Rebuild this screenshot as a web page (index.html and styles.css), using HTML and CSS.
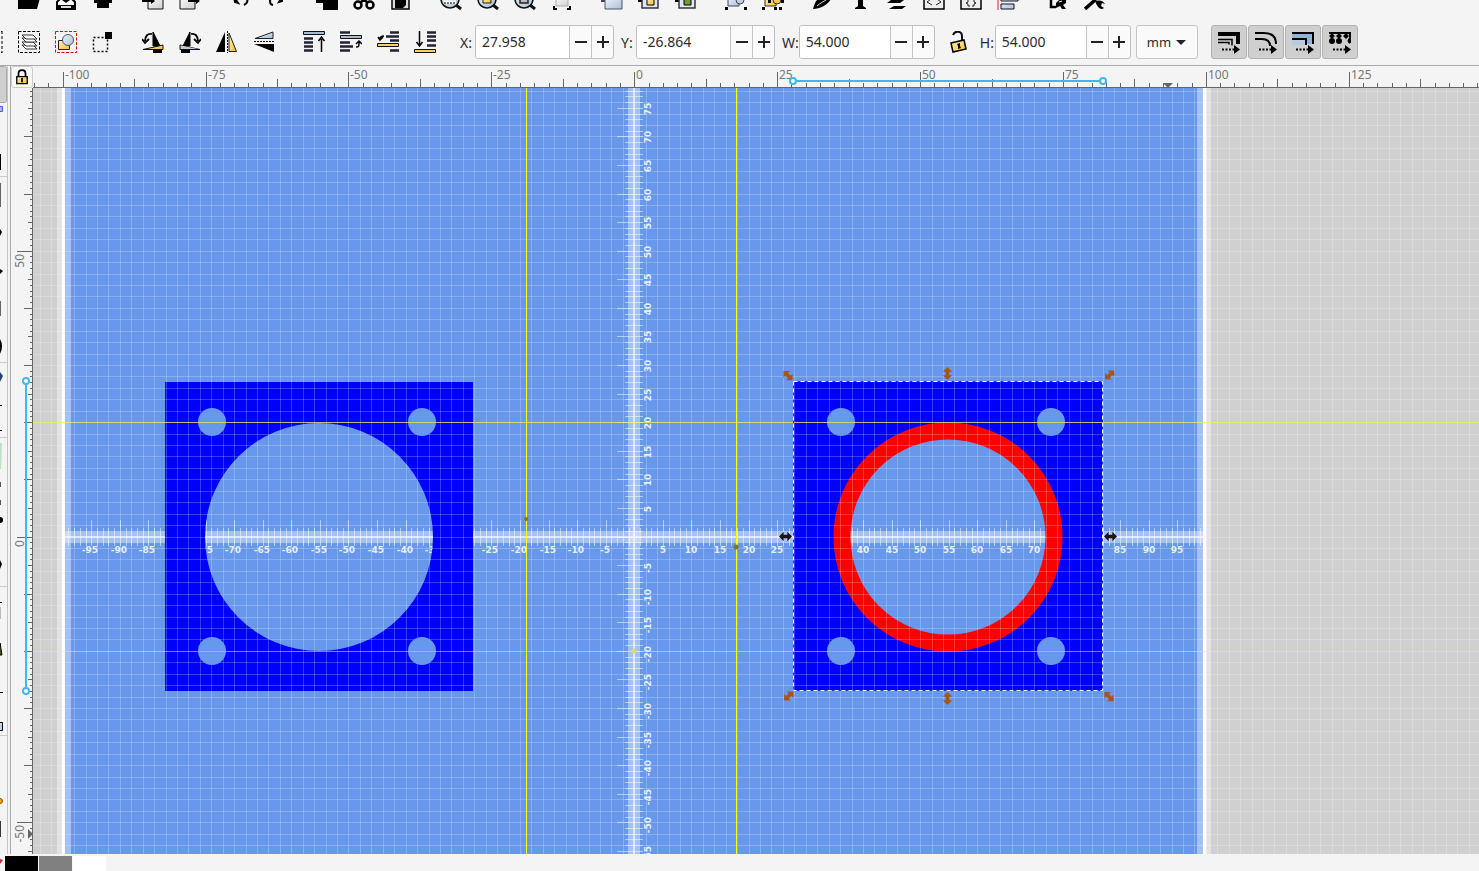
FILE: index.html
```
<!DOCTYPE html>
<html lang="en">
<head>
<meta charset="utf-8">
<title>Drawing editor</title>
<link rel="stylesheet" href="styles.css">
</head>
<body>
<svg class="defs" width="0" height="0" aria-hidden="true">
  <defs>
    <linearGradient id="gold" x1="0" x2="1" y1="0" y2="1"><stop offset="0" stop-color="#fff3b8"/><stop offset="1" stop-color="#f2bd2c"/></linearGradient>
    <linearGradient id="steel" x1="0" x2="1" y1="0" y2="1"><stop offset="0" stop-color="#eef4fb"/><stop offset="1" stop-color="#a9c0d8"/></linearGradient>
    <linearGradient id="paper" x1="0" x2="1" y1="0" y2="1"><stop offset="0" stop-color="#fff"/><stop offset="1" stop-color="#cfcfca"/></linearGradient>
    <symbol id="lens" viewBox="0 0 22 10"><circle cx="10" cy="-1" r="9" fill="url(#steel)" stroke="#111" stroke-width="1.6"/><path d="M16 5l5 4" stroke="#111" stroke-width="3"/></symbol>
    <symbol id="arrow" viewBox="0 0 14 14"><path d="M0 7l5-5v3h4V2l5 5-5 5V9H5v3z"/></symbol>
    <symbol id="turn" viewBox="0 0 22 22"><path d="M11 1v14h7z" fill="#000" stroke="#000"/><path d="M1 18.500L21 14v4.500z" fill="url(#gold)" stroke="#111"/><path d="M11 19h9v3h-9z"/><path d="M10 3C6 2 3 5 3 10M0 8l3 4 4-4" fill="none" stroke="#000" stroke-width="1.800"/></symbol>
    <symbol id="move" viewBox="0 0 24 24"><path d="M5 19.500h12" stroke="#000" stroke-width="2" stroke-dasharray="2 1.500"/><path d="M17 15l6 4.500-6 4.500z"/></symbol>
  </defs>
</svg>

<header class="toolbars">
  <div class="commands">
    <div class="group">
      <button class="cmd" aria-label="Open"><svg viewBox="0 0 22 10"><path d="M0 0h14l8-2-3 11H0z"/></svg></button>
      <button class="cmd" aria-label="Save"><svg viewBox="0 0 22 10"><path d="M2 2l4-4h10l4 4v7H2z" fill="#fff" stroke="#000" stroke-width="2"/><path d="M2 5h18v4H2z"/><path d="M6 6h10v2H6z" fill="#ddd"/><path d="M7 0h8l-4 3z"/></svg></button>
      <button class="cmd" aria-label="Print"><svg viewBox="0 0 22 10"><path d="M2 0h18v3H2zM5 2h12v6H5z"/></svg></button>
    </div>
    <div class="group">
      <button class="cmd" aria-label="Import"><svg viewBox="0 0 22 10"><path d="M6-4h15V9H6z" fill="url(#paper)" stroke="#111"/><path d="M0 0h10v2H0z"/><path d="M9-2l4 3-4 3z"/></svg></button>
      <button class="cmd" aria-label="Export"><svg viewBox="0 0 22 10"><path d="M1-4h15V9H1z" fill="url(#paper)" stroke="#111"/><path d="M9 0h9v2H9zM17-2l4 3-4 3z"/></svg></button>
    </div>
    <div class="group">
      <button class="cmd" aria-label="Undo"><svg viewBox="0 0 22 10"><path d="M5-3l4 6-3-1zM15-3c5 2 4 6 0 8" stroke="#000" stroke-width="2" fill="none"/></svg></button>
      <button class="cmd" aria-label="Redo"><svg viewBox="0 0 22 10"><path d="M16-3l-3 5 3-1zM7-3C3-1 3 4 7 5" stroke="#000" stroke-width="2" fill="none"/></svg></button>
    </div>
    <div class="group">
      <button class="cmd" aria-label="Copy"><svg viewBox="0 0 22 10"><path d="M0-5h13v8H0zM7-1h15v11H7z"/></svg></button>
      <button class="cmd" aria-label="Cut"><svg viewBox="0 0 22 10"><g fill="none" stroke="#000" stroke-width="2.500"><circle cx="5" cy="5" r="3.500"/><circle cx="17" cy="5" r="3.500"/><path d="M7 3l7-6M15 3L8-3"/></g></svg></button>
      <button class="cmd" aria-label="Paste"><svg viewBox="0 0 22 10"><path d="M2-4h17V9H2z" fill="#ddd" stroke="#000" stroke-width="1.500"/><path d="M5-2h11v7l-3 3H5z"/></svg></button>
    </div>
    <div class="group">
      <button class="cmd" aria-label="Zoom to selection"><svg viewBox="0 0 22 10"><use href="#lens"/><path d="M4 2h12" stroke="#fff" stroke-width="3"/><path d="M4 3h12" stroke="#000" stroke-dasharray="2 1"/></svg></button>
      <button class="cmd" aria-label="Zoom to drawing"><svg viewBox="0 0 22 10"><use href="#lens"/><path d="M6-2h8v5H6z" fill="url(#gold)" stroke="#222"/></svg></button>
      <button class="cmd" aria-label="Zoom to page"><svg viewBox="0 0 22 10"><use href="#lens"/><path d="M6-2h8v5H6z" fill="#bbb" stroke="#222" stroke-width="1.500"/></svg></button>
      <button class="cmd" aria-label="Zoom to width"><svg viewBox="0 0 22 10"><path d="M5-3h12v9H5z" fill="url(#paper)" stroke="#aaa"/><path d="M3 6v3h3M19 6v3h-3" stroke="#000" stroke-width="2" fill="none"/></svg></button>
    </div>
    <div class="group">
      <button class="cmd" aria-label="Duplicate"><svg viewBox="0 0 22 10"><path d="M0-3h6v5H0z" fill="#445"/><path d="M4-3h17V9H4z" fill="url(#steel)" stroke="#445566"/></svg></button>
      <button class="cmd" aria-label="Clone"><svg viewBox="0 0 22 10"><path d="M0-3h6v5H0z"/><path d="M4-3h16V8H4z" fill="#dde7f2" stroke="#334" stroke-width="1.500"/><path d="M9-3h7v8H9z" fill="url(#gold)" stroke="#000"/></svg></button>
      <button class="cmd" aria-label="Unlink clone"><svg viewBox="0 0 22 10"><path d="M0-3h6v5H0z"/><path d="M4-3h16V8H4z" fill="#dde7f2" stroke="#334" stroke-width="1.500"/><path d="M9-3h7v8H9z" fill="#6c9c3a" stroke="#000"/></svg></button>
    </div>
    <div class="group">
      <button class="cmd" aria-label="Group"><svg viewBox="0 0 22 10"><path d="M3-3h11v9H3z" fill="url(#steel)" stroke="#445"/><circle cx="15" cy="0" r="4" fill="#bdd0e4" stroke="#445"/><path d="M0 7h3v3H0zM19 7h3v3h-3z"/></svg></button>
      <button class="cmd" aria-label="Ungroup"><svg viewBox="0 0 22 10"><path d="M3-3h11v9H3z" fill="url(#gold)" stroke="#332"/><circle cx="15" cy="0" r="4" fill="#f2c54c" stroke="#332"/><path d="M0 7h3v3H0zM12 7h3v3h-3zM19 0h3v3h-3zM6 0h3v3H6zM17 7h3v3h-3z"/></svg></button>
    </div>
    <div class="group">
      <button class="cmd" aria-label="Fill and stroke"><svg viewBox="0 0 22 10"><path d="M1 9C3 2 5-3 12-3h8C17 4 9 9 1 9z"/><path d="M5 6C8 3 13 1 17-2" stroke="#ddd" fill="none"/></svg></button>
      <button class="cmd" aria-label="Text and font"><svg viewBox="0 0 22 10"><path d="M9-3h5v9l3 2v1H6V8l3-2z"/></svg></button>
      <button class="cmd" aria-label="Layers"><svg viewBox="0 0 22 10"><path d="M5 0h13l-4 3H1zM8 6h12l-4 3H3z"/></svg></button>
      <button class="cmd" aria-label="XML editor"><svg viewBox="0 0 22 10"><path d="M1-3h20V9H1z" fill="#eee" stroke="#000" stroke-width="1.500"/><path d="M8-1L4 2l5 3M14-1l4 3-5 3" fill="none" stroke="#222"/></svg></button>
      <button class="cmd" aria-label="CSS editor"><svg viewBox="0 0 22 10"><path d="M1-3h20V9H1z" fill="#eee" stroke="#000" stroke-width="1.500"/><path d="M8-2v4l-2 1 2 1v2h2M14-2v4l2 1-2 1v2h-2" fill="none" stroke="#222"/></svg></button>
      <button class="cmd" aria-label="Align"><svg viewBox="0 0 22 10"><path d="M1-3v13" stroke="#d22"/><path d="M4-3h17v4H4zM4 4h13v5H4z" fill="url(#steel)" stroke="#112"/></svg></button>
    </div>
    <div class="group">
      <button class="cmd" aria-label="Document properties"><svg viewBox="0 0 22 10"><path d="M4-3v10h5" stroke="#000" stroke-width="2.500" fill="none"/><path d="M9 8V3l4-4h6v4l-3 2 3 4h-4l-2-3z"/><path d="M12 2l3-1" stroke="#fff"/></svg></button>
      <button class="cmd" aria-label="Preferences"><svg viewBox="0 0 22 10"><path d="M1 9l9-8M8-3l4 4" stroke="#000" stroke-width="3.500" fill="none"/><path d="M11 1c4-1 8-1 10 3l-3-1-1 3 3 2c-4 3-7-2-9-7z"/></svg></button>
    </div>
  </div>

  <div class="controls">
    <div class="group">
      <button class="tool tool-cut" aria-label="Select all"><svg viewBox="0 0 22 22"><path d="M21 0v22M15 .5h6M15 21.500h6" stroke="#000" stroke-dasharray="3 2"/></svg></button>
      <button class="tool" aria-label="Select in all layers"><svg viewBox="0 0 22 22"><path d="M.5.500h21v21H.5z" fill="none" stroke="#000" stroke-dasharray="3 1.500"/><g fill="#fff" stroke="#333"><path d="M4 14h11l4 4H8z"/><path d="M4 11h11l4 4H8z"/><path d="M4 7h11l4 4H8z"/><path d="M4 4h11l4 4H8z"/></g></svg></button>
      <button class="tool" aria-label="Deselect"><svg viewBox="0 0 22 22"><path d="M.5.500h21v21H.5z" fill="none" stroke="#c11" stroke-dasharray="3 1.500"/><path d="M3.500 9.500h11v9h-11z" fill="url(#gold)" stroke="#222"/><circle cx="13" cy="9" r="5.500" fill="url(#steel)" stroke="#556"/></svg></button>
      <button class="tool" aria-label="Touch path"><svg viewBox="0 0 22 22"><path d="M1.500 6.500h14v14h-14z" fill="none" stroke="#000" stroke-width="1.500" stroke-dasharray="2 2"/><path d="M13 1h7v7h-7z"/></svg></button>
    </div>
    <div class="group">
      <button class="tool" aria-label="Rotate left"><svg viewBox="0 0 22 22"><use href="#turn"/></svg></button>
      <button class="tool" aria-label="Rotate right"><svg viewBox="0 0 22 22"><g transform="matrix(-1 0 0 1 22 0)"><use href="#turn"/><path d="M3 18L20 14.500v3.500z" fill="#bccde0"/></g></svg></button>
      <button class="tool" aria-label="Flip horizontal"><svg viewBox="0 0 22 22"><path d="M9 1v20H0z"/><path d="M13 2v18.500h7.500z" fill="url(#gold)" stroke="#222"/><path d="M11.500 0v22" stroke="#000" stroke-dasharray="2 1"/></svg></button>
      <button class="tool" aria-label="Flip vertical"><svg viewBox="0 0 22 22"><path d="M2 7.500L20 1v6.500z" fill="url(#steel)" stroke="#222"/><path d="M1 13h20v8z"/><path d="M1 10.500h20" stroke="#000" stroke-dasharray="2 1"/></svg></button>
    </div>
    <div class="group">
      <button class="tool" aria-label="Raise to top"><svg viewBox="0 0 22 22"><path d="M.5.500h21v3H.5z" fill="#aabcd0" stroke="#111"/><path d="M1 7.500h9M1 11.500h9M1 15.500h9M1 19.500h9" stroke="#223" stroke-width="2.500"/><path d="M18.500 21V8M15.500 10l3-4 3 4" fill="none" stroke="#000" stroke-width="1.500"/></svg></button>
      <button class="tool" aria-label="Raise"><svg viewBox="0 0 22 22"><path d="M.5 4.500h21v3H.5z" fill="#aabcd0" stroke="#111"/><path d="M0 1.500h10M0 11.500h10M0 15.500h13M0 19.500h10" stroke="#223" stroke-width="2.500"/><path d="M16 16c3 0 3-1 3-4M16 13l3-3 3 3" fill="none" stroke="#000" stroke-width="1.500"/></svg></button>
      <button class="tool" aria-label="Lower"><svg viewBox="0 0 22 22"><path d="M.5 12.500h21v3H.5z" fill="#f5d264" stroke="#111"/><path d="M13 1.500h9M9 5.500h13M13 9.500h9M13 19.500h9" stroke="#223" stroke-width="2.500"/><path d="M7 5C4 5 3 6 3 8M1 6l2 3 3-3" fill="none" stroke="#000" stroke-width="1.500"/></svg></button>
      <button class="tool" aria-label="Lower to bottom"><svg viewBox="0 0 22 22"><path d="M.5 18.500h21v3H.5z" fill="#f5d264" stroke="#111"/><path d="M13 1.500h9M13 5.500h9M13 9.500h9M13 14.500h9" stroke="#223" stroke-width="2.500"/><path d="M5.500 0v14M2.500 11l3 4 3-4" fill="none" stroke="#000" stroke-width="1.500"/></svg></button>
    </div>
    <div class="fields">
      <div class="field"><label for="x">X:</label><div class="spin"><input id="x" type="text" value="27.958"><button aria-label="Decrease X"><i class="minus"></i></button><button aria-label="Increase X"><i class="plus"></i></button></div></div>
      <div class="field"><label for="y">Y:</label><div class="spin"><input id="y" type="text" value="-26.864"><button aria-label="Decrease Y"><i class="minus"></i></button><button aria-label="Increase Y"><i class="plus"></i></button></div></div>
      <div class="field"><label for="w">W:</label><div class="spin spin-size"><input id="w" type="text" value="54.000"><button aria-label="Decrease W"><i class="minus"></i></button><button aria-label="Increase W"><i class="plus"></i></button></div></div>
      <button class="tool lock-ratio" aria-label="Lock ratio"><svg viewBox="0 0 22 22"><path d="M6 4c2-5 9-4 9 1v5" fill="none" stroke="#111" stroke-width="2"/><path d="M4 12l13-3 2 9-13 3z" fill="url(#gold)" stroke="#000" stroke-width="1.500"/><path d="M10 13l3-1v3l1 2-3 1v-3z"/></svg></button>
      <div class="field"><label for="h">H:</label><div class="spin spin-size"><input id="h" type="text" value="54.000"><button aria-label="Decrease H"><i class="minus"></i></button><button aria-label="Increase H"><i class="plus"></i></button></div></div>
      <div class="unit"><select aria-label="Unit"><option>mm</option><option>px</option></select></div>
    </div>
    <div class="toggles">
      <button aria-pressed="true" aria-label="Scale stroke width"><svg viewBox="0 0 24 24"><path d="M1 4h20v10" fill="none" stroke="#000" stroke-width="4"/><path d="M1 9.500h14v6M1 12.500h11v2" fill="none" stroke="#000" stroke-width="1.500"/><use href="#move"/></svg></button>
      <button aria-pressed="true" aria-label="Scale corners"><svg viewBox="0 0 24 24"><path d="M1 3h9q12 0 12 11M1 9h7q8 0 8 7" fill="none" stroke="#000" stroke-width="2"/><use href="#move"/></svg></button>
      <button aria-pressed="true" aria-label="Move gradients"><svg viewBox="0 0 24 24"><path d="M1 3h21v11h-7V9H1z" fill="#93b3d8"/><path d="M1 9h14v6H1z" fill="#b7cbe2"/><path d="M1 3h21v11M1 9h14v6" fill="none" stroke="#000" stroke-width="2"/><use href="#move"/></svg></button>
      <button aria-pressed="true" aria-label="Move patterns"><svg viewBox="0 0 24 24"><path d="M1 3h21v10" fill="none" stroke="#000" stroke-width="2"/><path d="M4 3l3 3-3 3-3-3zM11 3l3 3-3 3-3-3zM18 3l3 3-3 3-3-3z"/><circle cx="4" cy="11" r="3"/><circle cx="11" cy="11" r="3"/><path d="M22 7v7q-5-3 0-7z"/><use href="#move"/></svg></button>
    </div>
  </div>
</header>

<main class="workspace">
  <aside class="toolbox" aria-label="Tools">
    <svg class="fill" aria-hidden="true">
      <path d="M-5 .500H4.500Q6.500.500 6.500 2.500V34.500Q6.500 36.500 4.500 36.500H-5z" fill="#cfcfcf" stroke="#aaa"/>
      <path d="M-2 40.500H2.500v5H-2z" fill="#aab4ff" stroke="#55f"/>
      <path d="M0 88h1v16H0z"/><path d="M0 117h1v24H0zM0 235h1v15H0z" fill="#666"/>
      <path d="M0 163l2 3-2 4zM0 203l3 2-3 3zM0 273q4 7 0 15z"/><path d="M0 306l3 4-3 6z" fill="#247"/>
      <path d="M0 339.500h2M0 364.500h2M0 536.500h2M0 626.500h3" stroke="#000"/><path d="M0 377h2l-1 26H0z" fill="#bde0c2"/>
      <path d="M0 416h1v5H0zM0 434h1v5H0z" fill="#555"/><circle cx="0" cy="454" r="3"/><path d="M0 494l2 4-2 5z"/>
      <path d="M0 541h1v12H0z" fill="#bbb"/><path d="M0 577l2 12H0z" fill="#7b3" stroke="#000"/>
      <path d="M-2 656.500H2.500v8H-2z" fill="#c2d2e6" stroke="#000"/><circle cx="0" cy="735" r="2.500" fill="#f3a51e" stroke="#954f00"/><path d="M0 755h1v16H0z" fill="#334"/>
      <path d="M0 110.500h7M0 296.500h7M0 371.500h7M0 520.500h7M0 669.500h7" stroke="#ccc"/>
    </svg>
  </aside>
  <div class="divider"></div>
  <div class="board">
    <button class="corner" aria-label="Lock guides"><svg viewBox="0 0 16 18"><path d="M4 9V5q0-4 4-4t4 4v4" fill="none" stroke="#000" stroke-width="2"/><path d="M2 8.500h12v8H2z" fill="url(#gold)" stroke="#000" stroke-width="1.500"/><path d="M7 10h2v5H7z"/></svg></button>
    <svg class="ruler ruler-x" role="img" aria-label="Horizontal ruler">
      <g id="ruler-x"></g>
      <path d="M1130 17h10l-5 5z" fill="#666"/>
      <path d="M760 15h310" stroke="#43b4f4" stroke-width="2"/>
      <g fill="#fff" stroke="#43b4f4" stroke-width="2"><circle cx="760" cy="15" r="3"/><circle cx="1070" cy="15" r="3"/></g>
    </svg>
    <svg class="ruler ruler-y" role="img" aria-label="Vertical ruler">
      <g id="ruler-y"></g>
      <path d="M17 741v10l5-5z" fill="#666"/>
      <path d="M15 293v310" stroke="#43b4f4" stroke-width="2"/>
      <g fill="#fff" stroke="#43b4f4" stroke-width="2"><circle cx="15" cy="293" r="3"/><circle cx="15" cy="603" r="3"/></g>
    </svg>
    <svg class="canvas" role="img" aria-label="Drawing canvas">
      <rect width="100%" height="100%" fill="#d0d0d0"/>
      <rect x="24" width="1154" height="100%" fill="#e3e3e3"/>
      <rect x="32" width="1138" height="100%" fill="#a5c0f3"/>
      <rect x="38" width="1126" height="100%" fill="#6898eb"/>
      <g id="axes" fill="#fff"></g>
      <g fill="#00f">
        <path fill-rule="evenodd" d="M132 294h308v309H132zM172 449a114 114 0 1 0 228 0a114 114 0 1 0-228 0z"/>
        <path fill-rule="evenodd" d="M761 294h308v309H761zM801 449a114 114 0 1 0 228 0a114 114 0 1 0-228 0z"/>
      </g>
      <circle cx="915" cy="449" r="106" fill="none" stroke="#f00" stroke-width="17"/>
      <g id="grid" fill="#fff" fill-opacity=".22"></g>
      <rect x="29" width="3" height="100%" fill="#fff"/>
      <rect x="1170" width="3" height="100%" fill="#fff"/>
      <g fill="#6898eb">
        <circle cx="179" cy="334" r="14"/><circle cx="389" cy="334" r="14"/><circle cx="179" cy="563" r="14"/><circle cx="389" cy="563" r="14"/>
        <circle cx="808" cy="334" r="14"/><circle cx="1018" cy="334" r="14"/><circle cx="808" cy="563" r="14"/><circle cx="1018" cy="563" r="14"/>
      </g>
      <g fill="#ff0">
        <rect x="493" width="1" height="100%"/><rect x="703" width="1" height="100%"/>
      </g>
      <g fill="#e8f050">
        <rect x="0" y="334" width="100%" height="1" fill-opacity=".7"/>
        <rect x="0" y="563" width="100%" height="1" fill-opacity=".4"/>
      </g>
      <g fill="#7c7a10"><circle cx="703" cy="459" r="2.500"/><circle cx="493" cy="431" r="2"/><circle cx="601" cy="563" r="2.500" fill="#cde070"/></g>
      <path d="M760.500 293.500h309v309h-309z" fill="none" stroke="#23c"/>
      <path d="M760.500 293.500h309v309h-309z" fill="none" stroke="#fff" stroke-dasharray="4 3"/>
      <g id="handles"></g>
    </svg>
  </div>
</main>
<footer class="palette">
  <svg class="none" viewBox="0 0 5 15"><path d="M0 3l3 1-3 4z" fill="#c23"/></svg>
  <button class="swatch black" aria-label="Black"></button>
  <button class="swatch gray" aria-label="50% Gray"></button>
  <button class="swatch white" aria-label="White"></button>
</footer>
<script src="script.js"></script>
</body>
</html>
```
FILE: styles.css
```
* { box-sizing: border-box; }
body {
  margin: 0;
  height: 100vh;
  display: flex;
  flex-direction: column;
  overflow: hidden;
  background: #f4f4f4;
  color: #2b2b2b;
  font-family: "Noto Sans", "Open Sans", sans-serif;
  font-size: 14px;
}
button { padding: 0; border: 0; background: none; font: inherit; color: inherit; }
svg { display: block; }
.defs { position: absolute; }
.toolbars { border-bottom: 1px solid #aaa; flex: none; }
.commands { display: flex; gap: 28px; padding-left: 18px; height: 10px; }
.group { display: flex; gap: 15px; flex: none; }
.cmd svg { width: 22px; height: 10px; }
.controls { display: flex; align-items: center; gap: 28px; padding: 15px 0 6px; }
.tool svg { width: 22px; height: 22px; }
.tool-cut { width: 3px; overflow: hidden; display: flex; justify-content: flex-end; }
.tool-cut svg { flex: none; }
.fields { display: flex; align-items: center; gap: 7px; margin-left: -4px; flex: none; }
.field { display: flex; align-items: center; }
.field label { min-width: 15px; white-space: nowrap; }
.spin {
  display: flex;
  height: 34px;
  width: 139px;
  border: 1px solid #c0c0c0;
  border-radius: 3px;
  background: #fafafa;
  overflow: hidden;
}
.spin-size { width: 136px; }
.spin input {
  flex: 1;
  min-width: 0;
  border: 0;
  padding: 0 6px 2px;
  background: #fff;
  font: inherit;
  color: inherit;
}
.spin button { width: 22px; border-left: 1px solid #c6c6c6; display: grid; place-items: center; }
.minus, .plus { display: block; width: 12px; height: 12px; background: linear-gradient(#222, #222) center / 12px 2px no-repeat; }
.plus { background: linear-gradient(#222, #222) center / 12px 2px no-repeat, linear-gradient(#222, #222) center / 2px 12px no-repeat; }
.lock-ratio { margin: 0 4px 0 5px; }
.unit { position: relative; margin-left: -2px; }
.unit select {
  appearance: none;
  width: 62px;
  height: 34px;
  padding: 0 10px;
  border: 1px solid #c6c6c6;
  border-radius: 3px;
  background: #fafafa;
  font: inherit;
  font-size: 13px;
  color: inherit;
}
.unit::after {
  content: "";
  position: absolute;
  right: 12px;
  top: 15px;
  border: 5px solid transparent;
  border-top-color: #222;
  pointer-events: none;
}
.toggles { display: flex; gap: 1px; margin-left: -15px; }
.toggles button {
  width: 36px;
  height: 34px;
  border: 1px solid #b2b2b2;
  border-radius: 3px;
  background: #cfcfcf;
  display: grid;
  place-items: center;
}
.toggles svg { width: 24px; height: 24px; }
.workspace { flex: 1; min-height: 0; display: flex; }
.toolbox { width: 8px; border-right: 1px solid #c4c4c4; }
.fill { width: 100%; height: 100%; }
.divider { width: 3px; border-right: 1px solid #aaa; }
.board { flex: 1; min-width: 0; display: grid; grid-template: 22px 1fr / 22px 1fr; }
.corner { border: 1px solid #ccc; border-radius: 3px; background: #f9f9f9; display: grid; place-items: center; }
.corner svg { width: 14px; height: 16px; }
.ruler { width: 100%; height: 100%; font-size: 12px; overflow: hidden; min-width: 0; min-height: 0; }
.ruler text { fill: #777; }
.ruler-x { border-bottom: 1px solid #666; }
.ruler-y { border-right: 1px solid #666; }
.canvas { width: 100%; height: 100%; min-height: 0; overflow: hidden; }
.canvas text { font: bold 9px "DejaVu Sans", sans-serif; fill: #fff; fill-opacity: .85; text-anchor: middle; }
.palette { flex: none; height: 17px; padding-top: 2px; display: flex; }
.palette .none { width: 5px; height: 15px; }
.swatch { width: 33px; height: 15px; margin-right: 1px; }
.black { background: #000; }
.gray { background: #808080; }
.white { background: #fff; }
```
FILE: script.js
```
const SCALE = 5.716;
const ORIGIN = { x: 601.3, y: 449 };
const PAGE = { left: 32, right: 1170 };

const byId = id => document.getElementById(id);
const view = document.querySelector(".canvas").getBoundingClientRect();

function add(parent, name, attrs, text) {
  const el = document.createElementNS("http://www.w3.org/2000/svg", name);
  for (const key in attrs) el.setAttribute(key, attrs[key]);
  if (text !== undefined) el.textContent = text;
  parent.appendChild(el);
}
const px = mm => Math.round(ORIGIN.x + mm * SCALE);
const py = mm => Math.floor(ORIGIN.y - mm * SCALE);
const lastX = (view.width - ORIGIN.x) / SCALE;
const lowestY = -(view.height - ORIGIN.y) / SCALE;

// Horizontal ruler: a tick each 2.5 mm, a label each 25 mm
for (let i = -42; i * 2.5 < lastX; i++) {
  const x = px(i * 2.5);
  const major = i % 10 === 0;
  const len = major ? 16 : i % 5 === 0 ? 9 : 5;
  add(byId("ruler-x"), "rect", { x: x, y: 22 - len, width: 1, height: len, fill: "#666" });
  if (major && x + 30 < view.width) add(byId("ruler-x"), "text", { x: x + 2, y: 13 }, i * 2.5);
}
// Vertical ruler: a tick each millimetre, a label each 50 mm
for (let i = Math.ceil(lowestY); i < 79; i++) {
  const y = py(i);
  const len = i % 50 === 0 ? 16 : i % 10 === 0 ? 9 : i % 5 === 0 ? 5 : 3;
  add(byId("ruler-y"), "rect", { x: 22 - len, y, width: len, height: 1, fill: "#666" });
  if (i % 50 === 0) add(byId("ruler-y"), "text", { transform: `translate(13 ${y + 3}) rotate(-90)`, "text-anchor": "end" }, i);
}
// Document grid, 2 mm
for (let i = -52; i * 2 < lastX; i++) add(byId("grid"), "rect", { x: px(i * 2), y: 0, width: 1, height: view.height });
for (let i = Math.ceil(lowestY / 2); i < 40; i++) add(byId("grid"), "rect", { x: 0, y: py(i * 2), width: view.width, height: 1 });

// Measuring axes
const axes = byId("axes");
add(axes, "rect", { x: PAGE.left, y: 443, width: PAGE.right - PAGE.left, height: 12, "fill-opacity": .4 });
add(axes, "rect", { x: PAGE.left, y: 448, width: PAGE.right - PAGE.left, height: 2, "fill-opacity": .6 });
add(axes, "rect", { x: 595, y: 0, width: 12, height: view.height, "fill-opacity": .4 });
add(axes, "rect", { x: 600, y: 0, width: 2, height: view.height, "fill-opacity": .6 });
for (let i = -99; i < 100; i++) {
  const major = i % 5 === 0;
  add(axes, "rect", { x: px(i), y: major ? 432 : 440, width: 1, height: major ? 26 : 18, "fill-opacity": .5 });
  if (major && i) add(axes, "text", { x: px(i) - (i < 0 ? 1 : 0), y: 465 }, i);
}
for (let i = Math.ceil(lowestY) - 1; i < 79; i++) {
  const major = i % 5 === 0;
  add(axes, "rect", { x: major ? 584 : 592, y: py(i), width: major ? 26 : 18, height: 1, "fill-opacity": .5 });
  if (major && i) add(axes, "text", { transform: `translate(618 ${py(i) + (i < 0 ? 3 : 1)}) rotate(-90)` }, i);
}
// Selection handles
const handles = [
  [755, 287, 45, "#a8541c"], [1076, 287, -45, "#a8541c"], [755, 608, -45, "#a8541c"], [1076, 608, 45, "#a8541c"],
  [915, 285, 90, "#a8541c"], [915, 610, 90, "#a8541c"], [752, 448, 0, "#1c1710"], [1077, 448, 0, "#1c1710"]
];
for (const [x, y, turn, fill] of handles)
  add(byId("handles"), "use", { href: "#arrow", x: -6, y: -6, width: 13, height: 13, fill, transform: `translate(${x} ${y}) rotate(${turn})` });
```
